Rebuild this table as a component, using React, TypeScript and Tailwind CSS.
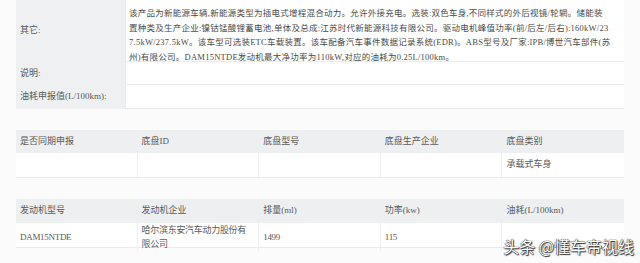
const lines = [
  "该产品为新能源车辆,新能源类型为插电式增程混合动力。允许外接充电。选装:双色车身,不同样式的外后视镜/轮辋。储能装",
  "置种类及生产企业:镍钴锰酸锂蓄电池,单体及总成:江苏时代新能源科技有限公司。驱动电机峰值功率(前/后左/后右):160kW/23",
  "7.5kW/237.5kW。该车型可选装ETC车载装置。该车配备汽车事件数据记录系统(EDR)。ABS型号及厂家:IPB/博世汽车部件(苏",
  "州)有限公司。DAM15NTDE发动机最大净功率为110kW,对应的油耗为0.25L/100km。",
];

const chassisHead = ["是否同期申报", "底盘ID", "底盘型号", "底盘生产企业", "底盘类别"];
const chassisRow = ["", "", "", "", "承载式车身"];
const engineHead = ["发动机型号", "发动机企业", "排量(ml)", "功率(kw)", "油耗(L/100km)"];
const engineRow = ["DAM15NTDE", "哈尔滨东安汽车动力股份有限公司", "1499", "115", ""];

const App = () => {
  return (
    <div className="relative w-[640px] h-[263px] overflow-hidden bg-[#fbfbfc] px-4 font-['Liberation_Serif','Noto_Sans_CJK_SC',serif] text-[9px] text-[#595959]">
      <div className="grid grid-cols-[109px_1fr] w-[608px]">
        <div className="h-[62px] bg-[#eff0f2] flex items-center pl-1">其它:</div>
        <div className="h-[62px] bg-white border-l border-b border-[#ebebed] pl-[3px] pt-[6px] text-[8.5px] leading-[14.5px] tracking-[0.25px] text-[#4a4a4a]">
          {lines.map((l) => (
            <div key={l} className="whitespace-nowrap">
              {l}
            </div>
          ))}
        </div>
        <div className="h-[23px] bg-[#eff0f2] flex items-center pl-1">说明:</div>
        <div className="h-[23px] bg-white border-l border-b border-[#ebebed]"></div>
        <div className="h-[24px] bg-[#eff0f2] flex items-center pl-1">油耗申报值(L/100km):</div>
        <div className="h-[24px] bg-white border-l border-b border-[#ebebed]"></div>
      </div>

      <div className="mt-[21px] w-[608px]">
        <div className="grid grid-cols-5 h-[23px] bg-[#eeeff1]">
          {chassisHead.map((h) => (
            <div key={h} className="flex items-center pl-1">
              {h}
            </div>
          ))}
        </div>
        <div className="grid grid-cols-5 h-[25px] bg-white border-b border-[#ebebed]">
          {chassisRow.map((c, i) => (
            <div key={i} className="flex items-center pl-1 border-r border-[#f0f0f2] last:border-r-0">
              {c}
            </div>
          ))}
        </div>
      </div>

      <div className="mt-[21px] w-[608px]">
        <div className="grid grid-cols-5 h-[24px] bg-[#eeeff1]">
          {engineHead.map((h) => (
            <div key={h} className="flex items-center pl-1">
              {h}
            </div>
          ))}
        </div>
        <div className="grid grid-cols-5 h-[25px] bg-white border-b border-[#ebebed]">
          {engineRow.map((c, i) => (
            <div key={i} className="flex items-center pl-1 pr-[6px] leading-[14px] tracking-[-0.3px] border-r border-[#f0f0f2] last:border-r-0">
              {c}
            </div>
          ))}
        </div>
      </div>

      <div className="absolute right-[6px] bottom-[9px] font-['Noto_Sans_CJK_SC',sans-serif] text-[16px] leading-none text-white [text-shadow:0_0_1px_#222,0_0_1px_#222,1px_1px_1px_#333]">
        头条 @懂车帝视线
      </div>
    </div>
  );
};

export default App;
